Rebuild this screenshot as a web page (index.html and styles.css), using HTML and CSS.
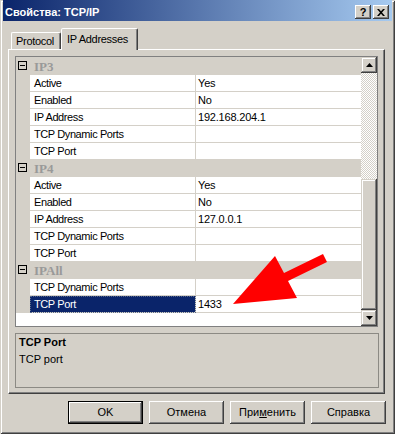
FILE: index.html
```html
<!DOCTYPE html>
<html lang="ru">
<head>
	<meta charset="UTF-8">
	<title>Свойства: TCP/IP</title>
	<link rel="stylesheet" href="styles.css">
</head>
<body>
	<div class="window">
		<div class="titlebar">
			<span class="title">Свойства: TCP/IP</span>
			<span class="tbtn help">?</span>
			<span class="tbtn close">
				<svg width="8" height="7" viewBox="0 0 8 7"><path d="M0 0h2l2 2.2L6 0h2L5 3.5 8 7H6L4 4.8 2 7H0l3-3.5z" fill="#000"/></svg>
			</span>
		</div>

		<div class="tabs">
			<div class="tab">Protocol</div>
			<div class="tab active">IP Addresses</div>
		</div>

		<div class="panel">
			<div class="grid">
				<div class="list">
					<div class="cat"><span class="gut"><i class="minus"></i></span><span class="catname">IP3</span></div>
					<div class="row"><span class="gut"></span><span class="name">Active</span><span class="val">Yes</span></div>
					<div class="row"><span class="gut"></span><span class="name">Enabled</span><span class="val">No</span></div>
					<div class="row"><span class="gut"></span><span class="name">IP Address</span><span class="val">192.168.204.1</span></div>
					<div class="row"><span class="gut"></span><span class="name">TCP Dynamic Ports</span><span class="val"></span></div>
					<div class="row"><span class="gut"></span><span class="name">TCP Port</span><span class="val"></span></div>

					<div class="cat"><span class="gut"><i class="minus"></i></span><span class="catname">IP4</span></div>
					<div class="row"><span class="gut"></span><span class="name">Active</span><span class="val">Yes</span></div>
					<div class="row"><span class="gut"></span><span class="name">Enabled</span><span class="val">No</span></div>
					<div class="row"><span class="gut"></span><span class="name">IP Address</span><span class="val">127.0.0.1</span></div>
					<div class="row"><span class="gut"></span><span class="name">TCP Dynamic Ports</span><span class="val"></span></div>
					<div class="row"><span class="gut"></span><span class="name">TCP Port</span><span class="val"></span></div>

					<div class="cat"><span class="gut"><i class="minus"></i></span><span class="catname">IPAll</span></div>
					<div class="row"><span class="gut"></span><span class="name">TCP Dynamic Ports</span><span class="val"></span></div>
					<div class="row sel"><span class="gut"></span><span class="name">TCP Port</span><span class="val">1433</span></div>
					<div class="filler"></div>
				</div>
				<div class="sb">
					<div class="sbtn"><svg width="7" height="4" viewBox="0 0 7 4"><path d="M3.5 0L7 4H0z" fill="#000"/></svg></div>
					<div class="track"></div>
					<div class="thumb"></div>
					<div class="sbtn down"><svg width="7" height="4" viewBox="0 0 7 4"><path d="M0 0h7L3.5 4z" fill="#000"/></svg></div>
				</div>
			</div>
			<div class="desc">
				<div class="desc-title">TCP Port</div>
				<div class="desc-text">TCP port</div>
			</div>
		</div>

		<div class="btns">
			<div class="btn def">OK</div>
			<div class="btn">Отмена</div>
			<div class="btn">При<u>м</u>енить</div>
			<div class="btn">Справка</div>
		</div>

		<svg class="arrow" width="395" height="434" viewBox="0 0 395 434">
			<polygon points="233,304 275,256 284,273 323,254 327,262 288,281 297,298" fill="#ff0000"/>
		</svg>
	</div>
</body>
</html>
```

FILE: styles.css
```css
*{
	margin: 0;
	padding: 0;
	box-sizing: border-box;
}
body{
	width: 395px;
	height: 434px;
	overflow: hidden;
	background: #d4d0c8;
	font: 11px "Liberation Sans", Arial, sans-serif;
	color: #000;
}
.window{
	position: relative;
	width: 395px;
	height: 434px;
	padding: 0 3px 3px;
	background: #d4d0c8;
	box-shadow: inset 1px 1px #d4d0c8, inset -1px -1px #404040, inset 2px 2px #fff, inset -2px -2px #808080;
}

/* title bar */
.titlebar{
	display: flex;
	align-items: flex-start;
	height: 21px;
	padding: 5px 3px 0 2px;
	background: linear-gradient(to right, #0a246a, #a6caf0);
	color: #fff;
}
.title{
	flex: 1;
	font-weight: bold;
	line-height: 14px;
}
.tbtn{
	display: flex;
	align-items: center;
	justify-content: center;
	width: 16px;
	height: 14px;
	background: #d4d0c8;
	color: #000;
	font-weight: bold;
	font-size: 11px;
	box-shadow: inset -1px -1px #404040, inset 1px 1px #fff, inset -2px -2px #808080;
}
.tbtn + .tbtn{
	margin-left: 2px;
}

/* tabs */
.tabs{
	display: flex;
	align-items: flex-end;
	height: 21px;
	margin: 7px 0 0 5px;
	padding-left: 3px;
}
.tab{
	width: 50px;
	height: 17px;
	padding: 2px 0 0 4px;
	line-height: 13px;
	letter-spacing: -0.3px;
	border: 1px solid;
	border-bottom: 0;
	border-color: #fff #404040 transparent #fff;
	border-radius: 2px 2px 0 0;
	box-shadow: inset -1px 0 #808080;
}
.tab.active{
	position: relative;
	z-index: 1;
	width: 77px;
	height: 22px;
	margin-bottom: -1px;
	padding: 4px 0 0 5px;
	background: #d4d0c8;
}

.panel{
	width: 377px;
	height: 345px;
	margin-left: 5px;
	padding: 6px 5px 5px 6px;
	border: 1px solid;
	border-color: #fff #404040 #404040 #fff;
	box-shadow: inset -1px -1px #808080;
}

/* property grid */
.grid{
	display: flex;
	width: 363px;
	height: 271px;
	border: 1px solid #808080;
}
.list{
	display: flex;
	flex-direction: column;
	width: 345px;
	border-top: 1px solid #d4d0c8;
	background: #fff;
}
.cat, .row{
	display: flex;
	flex: none;
	height: 17px;
}
.cat{
	background: #d4d0c8;
}
.gut{
	flex: none;
	width: 14px;
	background: #d4d0c8;
}
.minus{
	display: block;
	position: relative;
	width: 9px;
	height: 9px;
	margin: 3px 0 0 2px;
	border: 1px solid #000;
}
.minus::after{
	content: "";
	position: absolute;
	left: 1px;
	top: 3px;
	width: 5px;
	height: 1px;
	background: #000;
}
.catname{
	padding-left: 4px;
	font: bold 13px "Liberation Serif", "Times New Roman", serif;
	line-height: 17px;
	color: #999;
}
.name{
	width: 166px;
	padding-left: 4px;
	line-height: 16px;
	letter-spacing: -0.4px;
	border-right: 1px solid #d4d0c8;
	border-bottom: 1px solid #d4d0c8;
	white-space: nowrap;
}
.val{
	flex: 1;
	padding-left: 2px;
	line-height: 16px;
	letter-spacing: -0.2px;
	border-bottom: 1px solid #d4d0c8;
}
.sel .name{
	background: #0a246a;
	color: #fff;
	outline: 1px dotted #5a6a8a;
	outline-offset: -1px;
}
.filler{
	flex: 1;
	background: #fff;
}

/* scrollbar */
.sb{
	display: flex;
	flex-direction: column;
	width: 16px;
	background: repeating-conic-gradient(#fff 0 25%, #d4d0c8 0 50%) 0 0 / 2px 2px;
}
.sbtn, .thumb{
	flex: none;
	background: #d4d0c8;
	box-shadow: inset -1px -1px #404040, inset 1px 1px #d4d0c8, inset -2px -2px #808080, inset 2px 2px #fff;
}
.sbtn{
	display: flex;
	align-items: center;
	justify-content: center;
	height: 16px;
}
.sbtn svg{
	margin-top: -1px;
}
.track{
	height: 106px;
}
.thumb{
	height: 131px;
}
.down{
	margin-top: auto;
}

/* description */
.desc{
	height: 55px;
	margin-top: 6px;
	padding: 0 3px;
	border: 1px solid #8c8a84;
	line-height: 16px;
}
.desc-title{
	font-weight: bold;
}
.desc-text{
	margin-top: 1px;
}

/* dialog buttons */
.btns{
	display: flex;
	justify-content: flex-end;
	gap: 6px;
	margin: 7px 6px 0 0;
}
.btn{
	width: 75px;
	height: 23px;
	line-height: 23px;
	text-align: center;
	box-shadow: inset -1px -1px #404040, inset 1px 1px #fff, inset -2px -2px #808080, inset 2px 2px #d4d0c8;
}
.btn.def{
	line-height: 21px;
	border: 1px solid #000;
}

.arrow{
	position: absolute;
	left: 0;
	top: 0;
	pointer-events: none;
}
```
